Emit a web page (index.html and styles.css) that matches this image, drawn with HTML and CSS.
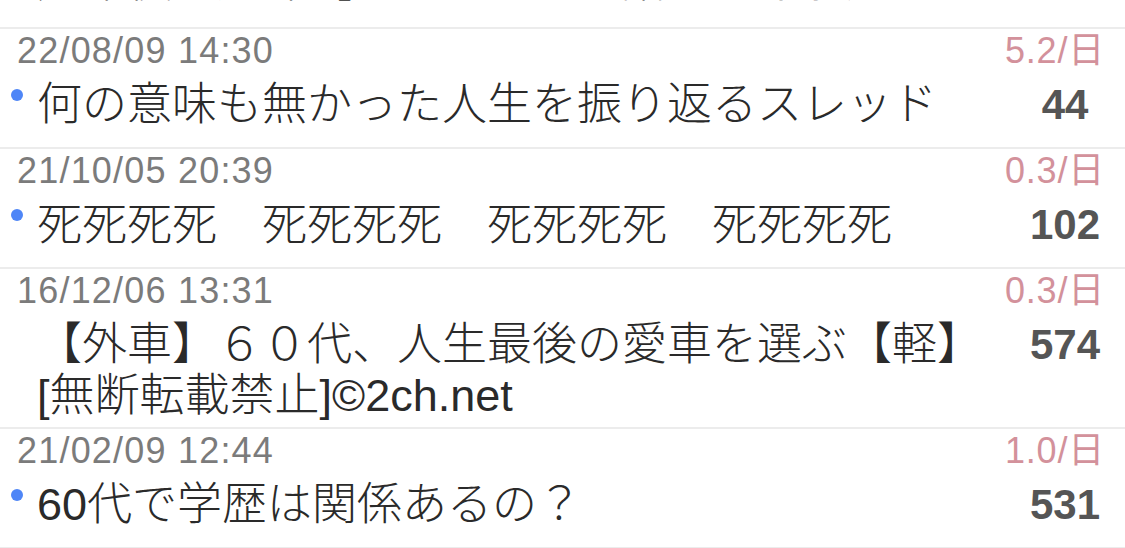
FILE: index.html
```html
<!DOCTYPE html>
<html lang="ja">
<head>
    <meta charset="UTF-8">
    <meta name="viewport" content="width=device-width, initial-scale=1.0">
    <title>スレッド一覧</title>
    <link rel="stylesheet" href="styles.css">
</head>
<body>
    <div class="thread-list">
        <!-- partly scrolled off the top -->
        <div class="thread partial">
            <div class="main">
                <div class="date">22/07/30 09:12</div>
                <div class="title"><span class="mark"></span><span class="text">定年後の趣味［ｗ］について語ろう様子見スレ</span></div>
            </div>
            <div class="side">
                <div class="rate">2.1/日</div>
                <div class="count">88</div>
            </div>
        </div>

        <div class="thread">
            <div class="main">
                <div class="date">22/08/09 14:30</div>
                <div class="title"><span class="mark"><span class="dot"></span></span><span class="text">何の意味も無かった人生を振り返るスレッド</span></div>
            </div>
            <div class="side">
                <div class="rate">5.2/日</div>
                <div class="count">44</div>
            </div>
        </div>

        <div class="thread">
            <div class="main">
                <div class="date">21/10/05 20:39</div>
                <div class="title"><span class="mark"><span class="dot"></span></span><span class="text">死死死死　死死死死　死死死死　死死死死</span></div>
            </div>
            <div class="side">
                <div class="rate">0.3/日</div>
                <div class="count">102</div>
            </div>
        </div>

        <div class="thread">
            <div class="main">
                <div class="date">16/12/06 13:31</div>
                <div class="title"><span class="mark"></span><span class="text">【外車】６０代、人生最後の愛車を選ぶ【軽】[無断転載禁止]©2ch.net</span></div>
            </div>
            <div class="side">
                <div class="rate">0.3/日</div>
                <div class="count">574</div>
            </div>
        </div>

        <div class="thread">
            <div class="main">
                <div class="date">21/02/09 12:44</div>
                <div class="title"><span class="mark"><span class="dot"></span></span><span class="text">60代で学歴は関係あるの？</span></div>
            </div>
            <div class="side">
                <div class="rate">1.0/日</div>
                <div class="count">531</div>
            </div>
        </div>
    </div>
</body>
</html>
```

FILE: styles.css
```css
body {
    margin: 0;
    background-color: #ffffff;
    font-family: "Liberation Sans", "Noto Sans CJK JP", sans-serif;
}

.thread-list {
    overflow: hidden;
}

.thread {
    display: flex;
    box-sizing: border-box;
    min-height: 120px;
    padding: 2px 20px 6px 0;
    border-bottom: 2px solid #ececec;
}

/* only the bottom edge of this one is on screen */
.thread.partial {
    min-height: 123px;
    margin-top: -94px;
}

.main {
    flex: 1;
    min-width: 0;
}

.date {
    padding-left: 17px;
    font-size: 36px;
    line-height: 40px;
    letter-spacing: 1.2px;
    color: #7b7b7b;
}

.title {
    display: flex;
    margin-top: 8px;
}

.mark {
    flex: none;
    width: 37px;
}

.dot {
    display: block;
    width: 12px;
    height: 12px;
    margin: 10px 0 0 11px;
    border-radius: 50%;
    background-color: #4f86f7;
}

.text {
    font-size: 45px;
    font-weight: 300;
    line-height: 51px;
    color: #2a2a2a;
}

.side {
    flex: none;
    width: 100px;
}

.rate {
    font-size: 36px;
    line-height: 40px;
    letter-spacing: 0.8px;
    text-align: right;
    white-space: nowrap;
    color: #d3919b;
}

.count {
    margin-top: 8px;
    padding-left: 20px;
    font-size: 42px;
    line-height: 51px;
    font-weight: bold;
    text-align: center;
    color: #555555;
}
```
